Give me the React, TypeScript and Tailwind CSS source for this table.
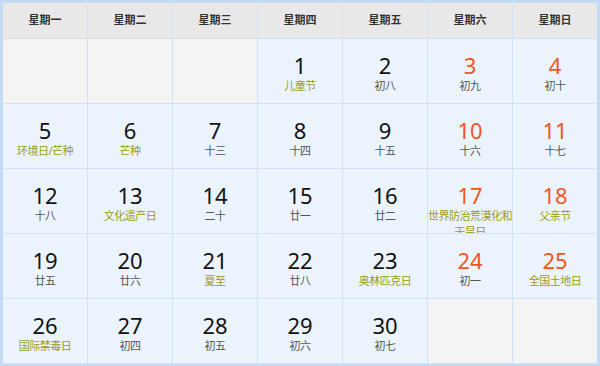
import React from 'react';

type Day = { d: number; sub: string; fest?: boolean; red?: boolean } | null;

const heads = ['星期一', '星期二', '星期三', '星期四', '星期五', '星期六', '星期日'];

const days: Day[] = [
  null,
  null,
  null,
  { d: 1, sub: '儿童节', fest: true },
  { d: 2, sub: '初八' },
  { d: 3, sub: '初九', red: true },
  { d: 4, sub: '初十', red: true },
  { d: 5, sub: '环境日/芒种', fest: true },
  { d: 6, sub: '芒种', fest: true },
  { d: 7, sub: '十三' },
  { d: 8, sub: '十四' },
  { d: 9, sub: '十五' },
  { d: 10, sub: '十六', red: true },
  { d: 11, sub: '十七', red: true },
  { d: 12, sub: '十八' },
  { d: 13, sub: '文化遗产日', fest: true },
  { d: 14, sub: '二十' },
  { d: 15, sub: '廿一' },
  { d: 16, sub: '廿二' },
  { d: 17, sub: '世界防治荒漠化和干旱日', fest: true, red: true },
  { d: 18, sub: '父亲节', fest: true, red: true },
  { d: 19, sub: '廿五' },
  { d: 20, sub: '廿六' },
  { d: 21, sub: '夏至', fest: true },
  { d: 22, sub: '廿八' },
  { d: 23, sub: '奥林匹克日', fest: true },
  { d: 24, sub: '初一', red: true },
  { d: 25, sub: '全国土地日', fest: true, red: true },
  { d: 26, sub: '国际禁毒日', fest: true },
  { d: 27, sub: '初四' },
  { d: 28, sub: '初五' },
  { d: 29, sub: '初六' },
  { d: 30, sub: '初七' },
  null,
  null,
];

export default function App() {
  return (
    <div
      className="w-[600px] h-[366px] bg-[#c4daf3] pt-[3px] pl-[3px] pr-[3px] pb-[2px] overflow-hidden"
      style={{ fontFamily: '"Noto Sans", "Noto Sans CJK SC", sans-serif' }}
    >
      <div className="grid grid-cols-7 grid-rows-[35px_repeat(5,64px)] gap-px bg-[#d3e2f3] h-full">
        {heads.map((h) => (
          <div key={h} className="bg-[#e8e8e8] flex items-center justify-center text-[11px] font-bold text-[#333]">
            {h}
          </div>
        ))}
        {days.map((day, i) =>
          day ? (
            <div key={i} className="bg-[#ebf4fc] flex flex-col items-center pt-[13px] overflow-hidden">
              <span className={`text-[22px] leading-[26px] ${day.red ? 'text-[#f2561d]' : 'text-[#111]'}`}>{day.d}</span>
              <span
                className={`text-[11px] leading-[16px] tracking-[-0.5px] text-center ${day.fest ? 'text-[#9c9c14]' : 'text-[#555]'}`}
              >
                {day.sub}
              </span>
            </div>
          ) : (
            <div key={i} className="bg-[#f4f4f4]" />
          ),
        )}
      </div>
    </div>
  );
}
